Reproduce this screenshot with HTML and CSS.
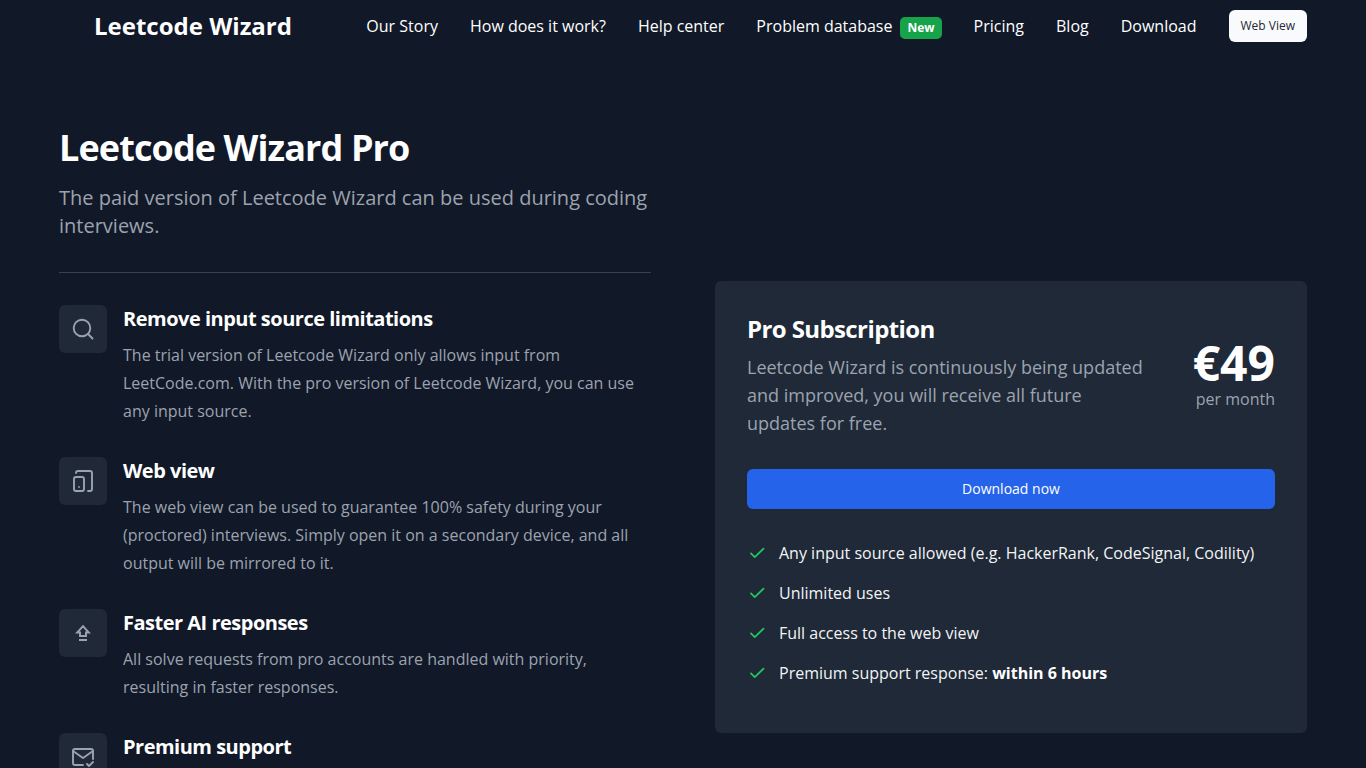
FILE: index.html
```html
<!DOCTYPE html>
<html lang="en">
<head>
  <meta charset="UTF-8" />
  <meta name="viewport" content="width=device-width, initial-scale=1.0"/>
  <title>Leetcode Wizard Pro</title>
  <link rel="stylesheet" href="styles.css">
</head>
<body>

  <header class="header">
    <a class="logo" href="#">Leetcode Wizard</a>
    <nav class="nav">
      <a href="#">Our Story</a>
      <a href="#">How does it work?</a>
      <a href="#">Help center</a>
      <a href="#" class="nav-database">Problem database <span class="badge">New</span></a>
      <a href="#">Pricing</a>
      <a href="#">Blog</a>
      <a href="#">Download</a>
      <a href="#" class="web-view">Web View</a>
    </nav>
  </header>

  <main class="container">
    <section class="intro">
      <h1>Leetcode Wizard Pro</h1>
      <p class="subtitle">The paid version of Leetcode Wizard can be used during coding interviews.</p>

      <div class="features">
        <div class="feature">
          <div class="feature-icon">
            <svg viewBox="0 0 24 24"><circle cx="11" cy="11" r="8.3"/><path d="M21.5 21.5l-4.5-4.5"/></svg>
          </div>
          <div>
            <h3>Remove input source limitations</h3>
            <p>The trial version of Leetcode Wizard only allows input from LeetCode.com. With the pro version of Leetcode Wizard, you can use any input source.</p>
          </div>
        </div>

        <div class="feature">
          <div class="feature-icon">
            <svg viewBox="0 0 24 24"><rect x="3" y="8" width="10" height="14" rx="2"/><path d="M5 4a2 2 0 0 1 2-2h12a2 2 0 0 1 2 2v16a2 2 0 0 1-2 2h-2M8 17.9v.01"/></svg>
          </div>
          <div>
            <h3>Web view</h3>
            <p>The web view can be used to guarantee 100% safety during your (proctored) interviews. Simply open it on a secondary device, and all output will be mirrored to it.</p>
          </div>
        </div>

        <div class="feature">
          <div class="feature-icon">
            <svg viewBox="0 0 24 24" class="sharp"><path d="M12 5.2l5.8 6.3H15V15H9v-3.5H6.2zM8 19h8"/></svg>
          </div>
          <div>
            <h3>Faster AI responses</h3>
            <p>All solve requests from pro accounts are handled with priority, resulting in faster responses.</p>
          </div>
        </div>

        <div class="feature">
          <div class="feature-icon">
            <svg viewBox="0 0 24 24"><path d="M12 20H4a2 2 0 0 1-2-2V6a2 2 0 0 1 2-2h16a2 2 0 0 1 2 2v8"/><path d="M2 6l10 7l10-7M16 19l2 2l4-4"/></svg>
          </div>
          <div>
            <h3>Premium support</h3>
          </div>
        </div>
      </div>
    </section>

    <section class="card">
      <div class="card-top">
        <div class="card-text">
          <h2>Pro Subscription</h2>
          <p>Leetcode Wizard is continuously being updated and improved, you will receive all future updates for free.</p>
        </div>
        <div class="price">
          <span class="amount">€49</span>
          <span class="period">per month</span>
        </div>
      </div>

      <a class="download" href="#">Download now</a>

      <ul class="perks">
        <li><svg viewBox="0 0 24 24"><path d="M4.8 12.5l4.5 4.5L19.8 6.8"/></svg><span>Any input source allowed (e.g. HackerRank, CodeSignal, Codility)</span></li>
        <li><svg viewBox="0 0 24 24"><path d="M4.8 12.5l4.5 4.5L19.8 6.8"/></svg><span>Unlimited uses</span></li>
        <li><svg viewBox="0 0 24 24"><path d="M4.8 12.5l4.5 4.5L19.8 6.8"/></svg><span>Full access to the web view</span></li>
        <li><svg viewBox="0 0 24 24"><path d="M4.8 12.5l4.5 4.5L19.8 6.8"/></svg><span>Premium support response: <strong>within 6 hours</strong></span></li>
      </ul>
    </section>
  </main>

</body>
</html>
```

FILE: styles.css
```css
* {
  box-sizing: border-box;
  margin: 0;
  padding: 0;
}

body {
  background: #111827;
  color: #fff;
  font-family: 'Open Sans', sans-serif;
  font-size: 16px;
  line-height: 24px;
  height: 100vh;
  overflow: hidden;
}

a {
  color: inherit;
  text-decoration: none;
}

svg {
  fill: none;
  stroke: currentColor;
  stroke-linecap: round;
  stroke-linejoin: round;
}

.header {
  max-width: 1280px;
  margin: 0 auto;
  padding: 10px 16px 0 51px;
  display: flex;
  justify-content: space-between;
  align-items: center;
}

.logo {
  font-size: 24px;
  line-height: 32px;
  font-weight: 700;
}

.nav {
  display: flex;
  align-items: center;
  gap: 32px;
}

.nav-database {
  display: flex;
  align-items: center;
  gap: 8px;
}

.badge {
  margin-top: 3px;
  padding: 3px 7px;
  border-radius: 5px;
  background: #16a34a;
  font-size: 12px;
  line-height: 16px;
  font-weight: 700;
}

.web-view {
  padding: 8px 12px;
  border-radius: 6px;
  background: #f9fafb;
  color: #1f2937;
  font-size: 12px;
  line-height: 16px;
}

.container {
  max-width: 1280px;
  margin: 0 auto;
  padding: 86px 16px 0;
  display: grid;
  grid-template-columns: 1fr 1fr;
  gap: 64px;
  align-items: start;
}

h1 {
  font-size: 36px;
  line-height: 40px;
  font-weight: 700;
  letter-spacing: -0.9px;
}

.subtitle {
  margin-top: 16px;
  padding-bottom: 32px;
  border-bottom: 1px solid #374151;
  color: #9ca3af;
  font-size: 20px;
  line-height: 28px;
}

.features {
  margin-top: 32px;
  display: flex;
  flex-direction: column;
  gap: 32px;
}

.feature {
  display: flex;
  gap: 16px;
}

.feature-icon {
  flex: none;
  width: 48px;
  height: 48px;
  border-radius: 6px;
  background: #1f2937;
  color: #9ca3af;
  display: flex;
  justify-content: center;
  align-items: center;
}

.feature-icon svg {
  width: 24px;
  height: 24px;
  stroke-width: 1.9;
}

.feature-icon .sharp {
  stroke-linecap: butt;
  stroke-linejoin: miter;
}

h3 {
  margin-bottom: 8px;
  font-size: 20px;
  line-height: 28px;
  font-weight: 700;
  letter-spacing: -0.5px;
}

.feature p {
  color: #9ca3af;
  line-height: 28px;
}

.card {
  margin-top: 153px;
  padding: 32px 32px 48px;
  border-radius: 6px;
  background: #1f2937;
}

.card-top {
  display: flex;
  justify-content: space-between;
  align-items: center;
  gap: 48px;
}

h2 {
  margin-bottom: 8px;
  font-size: 24px;
  line-height: 32px;
  font-weight: 700;
  letter-spacing: -0.6px;
}

.card-text p {
  color: #9ca3af;
  font-size: 18px;
  line-height: 28px;
}

.price {
  flex: none;
  display: flex;
  flex-direction: column;
  align-items: flex-end;
}

.amount {
  font-size: 48px;
  line-height: 48px;
  font-weight: 700;
}

.period {
  color: #9ca3af;
}

.download {
  display: block;
  margin: 32px 0;
  padding: 10px;
  border-radius: 6px;
  background: #2563eb;
  font-size: 14px;
  line-height: 20px;
  text-align: center;
}

.perks {
  list-style: none;
  display: flex;
  flex-direction: column;
  gap: 16px;
  color: #f3f4f6;
}

.perks li {
  display: flex;
  align-items: center;
  gap: 12px;
}

.perks svg {
  width: 20px;
  height: 20px;
  color: #22c55e;
  stroke-width: 2.2;
}

.perks strong {
  color: #fff;
}
```
